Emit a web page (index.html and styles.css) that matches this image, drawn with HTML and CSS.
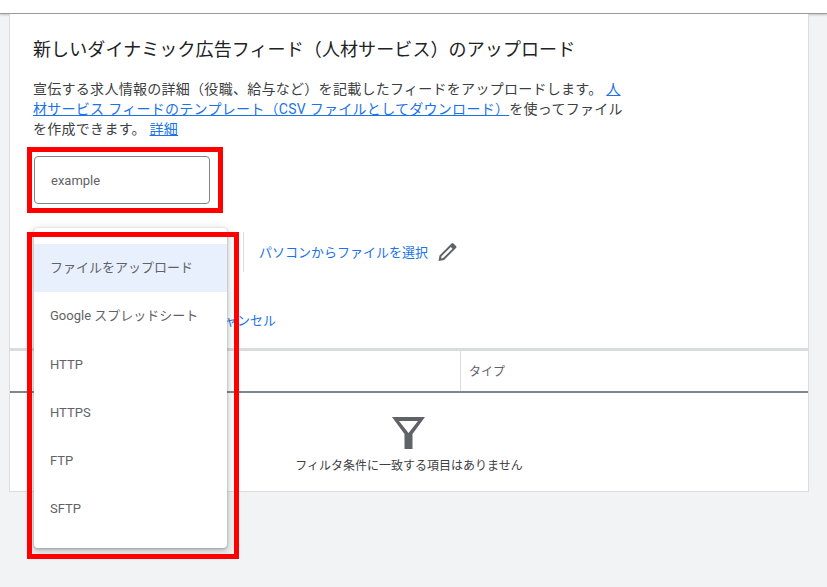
FILE: index.html
```html
<!DOCTYPE html>
<html lang="ja">
<head>
<meta charset="utf-8">
<title>フィードのアップロード</title>
<link rel="stylesheet" href="styles.css">
</head>
<body>
<div class="topbar"></div>
<main class="card">
  <section class="form">
    <h1 class="title">新しいダイナミック広告フィード（人材サービス）のアップロード</h1>
    <p class="desc">宣伝する求人情報の詳細（役職、給与など）を記載したフィードをアップロードします。 <a href="#">人材サービス フィードのテンプレート（CSV ファイルとしてダウンロード）</a>を使ってファイルを作成できます。 <a href="#">詳細</a></p>
    <div class="input">example</div>
    <div class="source">
      <div class="select-space"></div>
      <div class="divider"></div>
      <a class="pick" href="#">パソコンからファイルを選択</a>
      <svg class="pencil" viewBox="0 0 20 20" width="20" height="20"><path d="M0.5 19 1.5 13.5 13.5 1.5Q14.5 .5 15.5 1.5L18 4Q19 5 18 6L6 18ZM3 16.5 5.2 16 14.5 6.7 12.8 5 3.5 14.3Z" fill="#5f6368" fill-rule="evenodd"/></svg>
    </div>
    <div class="actions"><a href="#">キャンセル</a></div>
  </section>
  <section class="table">
    <div class="thead">
      <div class="th first"></div>
      <div class="th">タイプ</div>
    </div>
    <div class="empty">
      <svg class="funnel" viewBox="0 0 33 32" width="33" height="32"><path d="M0 0H33L20.5 17V32H12.5V17ZM7 4 16.5 16 26 4Z" fill="#5f6368" fill-rule="evenodd"/></svg>
      <div class="empty-text">フィルタ条件に一致する項目はありません</div>
    </div>
  </section>
</main>
<ul class="menu">
  <li class="active">ファイルをアップロード</li>
  <li>Google スプレッドシート</li>
  <li class="latin">HTTP</li>
  <li class="latin">HTTPS</li>
  <li class="latin">FTP</li>
  <li class="latin">SFTP</li>
</ul>
<div class="mark mark-input"></div>
<div class="mark mark-menu"></div>
</body>
</html>
```
FILE: styles.css
```css
* { box-sizing: border-box; }
html, body { margin: 0; height: 100%; }
body {
  width: 827px; height: 587px; overflow: hidden; position: relative;
  background: #f1f3f4; color: #3c4043;
  font-family: Roboto, "Noto Sans CJK JP", sans-serif; font-size: 14px;
}
.topbar { height: 14px; background: #fff; border-bottom: 1px solid #9a9a9a; box-shadow: 0 1px 2px rgba(0,0,0,.2); }
.card {
  margin-left: 9px; width: 800px; height: 478px; background: #fff;
  border: 1px solid #dadce0; border-top: 0; display: flex; flex-direction: column;
}
.form { height: 337px; padding: 23px 23px 0; border-bottom: 3px solid #dadce0; }
.title { margin: 0; font-size: 18px; letter-spacing: .1px; font-weight: 400; line-height: 26px; color: #202124; white-space: nowrap; }
.desc { margin: 16px 0 0; width: 592px; line-height: 20px; letter-spacing: .28px; color: #3c4043; }
a { color: #1a73e8; text-decoration: none; }
.desc a { text-decoration: underline; }
.input {
  margin: 17px 0 0 1px; width: 176px; height: 48px; padding-left: 16px; line-height: 47px;
  border: 1px solid #80868b; border-radius: 4px; color: #5f6368; font-size: 13px;
}
.source { display: flex; align-items: center; margin-top: 28px; height: 40px; }
.select-space { width: 210px; }
.divider { width: 1px; height: 40px; background: #dadce0; }
.pick { margin-left: 15px; font-size: 13px; padding-bottom: 2px; }
.pencil { margin-left: 10px; }
.actions { margin: 39px 0 0 178px; font-size: 13px; line-height: 20px; }
.table { flex: 1; display: flex; flex-direction: column; }
.thead { display: flex; height: 42px; border-bottom: 2px solid #80868b; }
.th { flex: 1; display: flex; align-items: center; padding: 0 0 2px 8px; color: #5f6368; font-size: 12px; }
.th.first { flex: 0 0 451px; border-right: 1px solid #dadce0; }
.empty { flex: 1; display: flex; flex-direction: column; align-items: center; padding-top: 24px; }
.funnel { display: block; margin-right: 1px; }
.empty-text { margin-top: 8px; font-size: 12px; line-height: 18px; color: #3c4043; }
.menu {
  position: absolute; left: 34px; top: 228px; width: 193px; height: 320px; margin: 0; padding: 16px 0 0;
  list-style: none; background: #fff; border-radius: 4px;
  box-shadow: 0 1px 3px rgba(60,64,67,.4), 0 3px 8px 2px rgba(60,64,67,.2);
}
.menu li { height: 48px; line-height: 48px; padding-left: 16px; color: #5f6368; font-size: 13px; white-space: nowrap; }
.menu li.active { background: #e8f0fe; }
.menu li.latin { line-height: 50px; }
.mark { position: absolute; border: 5px solid #f00; }
.mark-input { left: 27px; top: 147px; width: 196px; height: 66px; }
.mark-menu { left: 27px; top: 232px; width: 212px; height: 327px; }
```
